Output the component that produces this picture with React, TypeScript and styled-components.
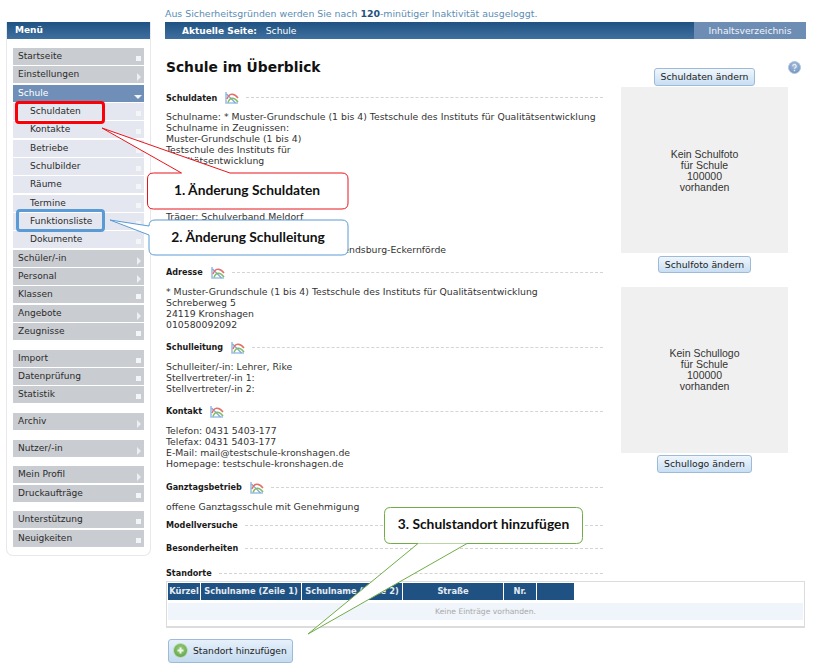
import styled, { createGlobalStyle } from "styled-components";

const GlobalStyle = createGlobalStyle`
    html, body {
        margin: 0;
        padding: 0;
        background: #fff;
    }
    body {
        font-family: "DejaVu Sans", Verdana, sans-serif;
        font-size: 9.3px;
        color: #333;
    }
`;

const Page = styled.div`
    position: relative;
    width: 819px;
    height: 670px;
    overflow: hidden;
    display: flex;
    align-items: flex-start;
    padding: 22px 0 0 6px;
    box-sizing: border-box;
`;

/* sidebar */
const Sidebar = styled.aside`
    width: 145px;
    height: 534px;
    flex-shrink: 0;
    box-sizing: border-box;
    border: 1px solid #e6e8ea;
    border-top: 0;
    border-radius: 0 0 7px 7px;
`;

const BlueHeader = styled.div`
    height: 17px;
    background: linear-gradient(#1f5282, #3f6f9f);
    color: #fff;
    line-height: 17px;
`;

const MenuTitle = styled(BlueHeader)`
    padding-left: 8px;
    margin-bottom: 9px;
    font-weight: 700;
    font-size: 9px;
`;

const MenuGroup = styled.div`
    padding: 0 6px;
    margin-bottom: 9.7px;
`;

const MenuItem = styled.div<{ $variant?: "active" | "sub" }>`
    position: relative;
    height: 17px;
    margin-bottom: 1.33px;
    line-height: 16px;
    font-size: 9.05px;
    padding-left: ${p => (p.$variant === "sub" ? "17px" : "5px")};
    background: ${p =>
        p.$variant === "active" ? "#6f8fb8" : p.$variant === "sub" ? "#e4e7ef" : "#c9ccd1"};
    color: ${p => (p.$variant === "active" ? "#fff" : "#2b2b2b")};
`;

const SquareMark = styled.span`
    position: absolute;
    right: 3px;
    bottom: 4px;
    width: 5px;
    height: 5px;
    background: #f4f5f7;
`;

const ArrowRight = styled.span`
    position: absolute;
    right: 3px;
    bottom: 2px;
    border-left: 4px solid #eef0f3;
    border-top: 4px solid transparent;
    border-bottom: 4px solid transparent;
`;

const ArrowDown = styled.span`
    position: absolute;
    right: 2px;
    bottom: 3px;
    border-top: 4px solid #f4f5f7;
    border-left: 4px solid transparent;
    border-right: 4px solid transparent;
`;

/* main area */
const Main = styled.main`
    margin-left: 14px;
    width: 641px;
    flex-shrink: 0;
`;

const Notice = styled.div`
    margin-top: -14px;
    height: 14px;
    line-height: 12px;
    font-size: 9.4px;
    color: #5b8db5;
    b {
        color: #1f5282;
    }
`;

const TopBar = styled(BlueHeader)`
    display: flex;
`;

const Breadcrumb = styled.div`
    flex: 1;
    padding-left: 17px;
    font-size: 9.2px;
    b {
        font-size: 9px;
        margin-right: 6px;
    }
`;

const TocTab = styled.div`
    width: 112px;
    text-align: center;
    background: #6d8db5;
    color: #f2f4f8;
    font-size: 9.2px;
    font-weight: 400;
`;

const Columns = styled.div`
    display: flex;
    position: relative;
`;

const Content = styled.div`
    width: 437px;
    padding-left: 1px;
    margin-right: 1px;
    white-space: nowrap;
`;

const Title = styled.h1`
    margin: 20px 0 0;
    font-size: 13.8px;
    line-height: 17px;
    font-weight: 700;
    color: #111;
`;

const Section = styled.section<{ $top: number }>`
    margin-top: ${p => p.$top}px;
`;

const SectionHead = styled.div`
    display: flex;
    align-items: center;
    height: 13px;
    font-size: 8.1px;
    font-weight: 700;
    color: #1a1a1a;
`;

const DashedLine = styled.span`
    flex: 1;
    margin-left: 7px;
    border-top: 1px dashed #d4d4d4;
`;

const IconSlot = styled.svg`
    margin-left: 8px;
    flex-shrink: 0;
`;

const Lines = styled.div`
    margin-top: 7px;
    line-height: 11.1px;
    font-size: 9.32px;
    color: #333;
`;

const Side = styled.div`
    width: 167px;
    margin-left: 17px;
    display: flex;
    flex-direction: column;
    align-items: center;
    padding-top: 29px;
`;

const PlainButton = styled.button`
    height: 17.5px;
    padding: 0 6px;
    border: 1px solid #9dbbd8;
    border-radius: 3px;
    background: linear-gradient(#f0f6fc, #c8def3);
    color: #222;
    font-family: inherit;
    font-size: 9.3px;
    line-height: 15px;
    white-space: nowrap;
`;

const PhotoBox = styled.div`
    width: 167px;
    height: 166px;
    box-sizing: border-box;
    padding-top: 1px;
    margin: 1.5px 0 2.5px;
    background: #f0f0f0;
    display: flex;
    align-items: center;
    justify-content: center;
    text-align: center;
    line-height: 11px;
    font-family: "Liberation Sans", Arial, sans-serif;
    font-size: 10.5px;
    color: #333;
`;

const PhotoGap = styled.div`
    height: 12px;
`;

const HelpIcon = styled.svg`
    position: absolute;
    top: 22px;
    left: 623px;
`;

const TableFrame = styled.div`
    margin-top: 1px;
    width: 639px;
    height: 47px;
    box-sizing: border-box;
    border: 1px solid #dcdcdc;
    border-bottom-width: 2px;
    padding: 1px;
`;

const HeadRow = styled.div`
    display: flex;
    gap: 1px;
`;

const HeadCell = styled.div<{ $w: number }>`
    width: ${p => p.$w}px;
    height: 17px;
    background: #1f5282;
    color: #e4ebf3;
    font-size: 8.3px;
    font-weight: 700;
    line-height: 16px;
    text-align: center;
    white-space: nowrap;
`;

const EmptyRow = styled.div`
    margin-top: 3px;
    height: 17px;
    background: #f0f4fb;
    text-align: center;
    color: #a9a9a9;
    font-size: 7.6px;
    line-height: 18px;
`;

const AddButton = styled.button`
    display: flex;
    align-items: center;
    gap: 5px;
    margin: 11px 0 0 2px;
    height: 24px;
    width: 125px;
    padding: 0 0 0 4px;
    border: 1px solid #9dbbd8;
    border-radius: 3px;
    background: linear-gradient(#e6f0fa, #c4dbf1);
    color: #222;
    font-family: inherit;
    font-size: 9.2px;
    white-space: nowrap;
`;

/* annotation overlays */
const Marker = styled.div<{ $color: string; $left: number; $top: number; $w: number; $h: number }>`
    position: absolute;
    left: ${p => p.$left}px;
    top: ${p => p.$top}px;
    width: ${p => p.$w}px;
    height: ${p => p.$h}px;
    box-sizing: border-box;
    border: 3px solid ${p => p.$color};
    border-radius: 4px;
`;

const CalloutShape = styled.svg`
    position: absolute;
    left: 0;
    top: 0;
`;

const CalloutLabel = styled.div<{ $left: number; $top: number; $w: number; $h: number }>`
    position: absolute;
    left: ${p => p.$left}px;
    top: ${p => p.$top}px;
    width: ${p => p.$w}px;
    height: ${p => p.$h}px;
    display: flex;
    align-items: center;
    justify-content: center;
    font-family: Lato, "Open Sans", sans-serif;
    font-size: 13.8px;
    font-weight: 700;
    color: #111;
    white-space: nowrap;
`;

const ChartIcon = () => (
    <IconSlot width="14" height="13" viewBox="0 0 14 13">
        <path d="M1 1v11h12" fill="none" stroke="#9dc0e6" strokeWidth="1.6" />
        <path d="M1.5 3 10.5 12" fill="none" stroke="#7ba9d8" strokeWidth="1.2" />
        <path d="M2 8C4 2 9 1.5 13 7" fill="none" stroke="#e2706c" strokeWidth="1.5" />
        <path d="M3 11.5C5 6 9 6 13 11" fill="none" stroke="#82bb62" strokeWidth="1.5" />
    </IconSlot>
);

const MenuRow = ({ label, mark, variant }: { label: string; mark: "s" | "r" | "d"; variant?: "active" | "sub" }) => (
    <MenuItem $variant={variant}>
        {label}
        {mark === "s" && <SquareMark />}
        {mark === "r" && <ArrowRight />}
        {mark === "d" && <ArrowDown />}
    </MenuItem>
);

const Head = ({ label, icon = true }: { label: string; icon?: boolean }) => (
    <SectionHead>
        {label}
        {icon && <ChartIcon />}
        <DashedLine />
    </SectionHead>
);

const roundBox = (x: number, y: number, w: number, h: number, r: number) =>
    `M${x + r} ${y}H${x + w - r}Q${x + w} ${y} ${x + w} ${y + r}V${y + h - r}Q${x + w} ${y + h} ${x + w - r} ${y + h}H${x + r}Q${x} ${y + h} ${x} ${y + h - r}V${y + r}Q${x} ${y} ${x + r} ${y}Z`;

export default function App() {
    return (
        <>
            <GlobalStyle />
            <Page>
                <Sidebar>
                    <MenuTitle>Menü</MenuTitle>
                    <MenuGroup>
                        <MenuRow label="Startseite" mark="s" />
                        <MenuRow label="Einstellungen" mark="r" />
                        <MenuRow label="Schule" mark="d" variant="active" />
                        <MenuRow label="Schuldaten" mark="s" variant="sub" />
                        <MenuRow label="Kontakte" mark="s" variant="sub" />
                        <MenuRow label="Betriebe" mark="s" variant="sub" />
                        <MenuRow label="Schulbilder" mark="s" variant="sub" />
                        <MenuRow label="Räume" mark="s" variant="sub" />
                        <MenuRow label="Termine" mark="s" variant="sub" />
                        <MenuRow label="Funktionsliste" mark="s" variant="sub" />
                        <MenuRow label="Dokumente" mark="s" variant="sub" />
                        <MenuRow label="Schüler/-in" mark="r" />
                        <MenuRow label="Personal" mark="r" />
                        <MenuRow label="Klassen" mark="s" />
                        <MenuRow label="Angebote" mark="r" />
                        <MenuRow label="Zeugnisse" mark="s" />
                    </MenuGroup>
                    <MenuGroup>
                        <MenuRow label="Import" mark="s" />
                        <MenuRow label="Datenprüfung" mark="s" />
                        <MenuRow label="Statistik" mark="s" />
                    </MenuGroup>
                    <MenuGroup>
                        <MenuRow label="Archiv" mark="r" />
                    </MenuGroup>
                    <MenuGroup>
                        <MenuRow label="Nutzer/-in" mark="r" />
                    </MenuGroup>
                    <MenuGroup>
                        <MenuRow label="Mein Profil" mark="r" />
                        <MenuRow label="Druckaufträge" mark="s" />
                    </MenuGroup>
                    <MenuGroup>
                        <MenuRow label="Unterstützung" mark="s" />
                        <MenuRow label="Neuigkeiten" mark="s" />
                    </MenuGroup>
                </Sidebar>

                <Main>
                    <Notice>
                        Aus Sicherheitsgründen werden Sie nach <b>120</b>-minütiger Inaktivität ausgeloggt.
                    </Notice>
                    <TopBar>
                        <Breadcrumb>
                            <b>Aktuelle Seite:</b> Schule
                        </Breadcrumb>
                        <TocTab>Inhaltsverzeichnis</TocTab>
                    </TopBar>
                    <Columns>
                        <Content>
                            <Title>Schule im Überblick</Title>
                            <Section $top={15}>
                                <Head label="Schuldaten" />
                                <Lines>
                                    Schulname: * Muster-Grundschule (1 bis 4) Testschule des Instituts für Qualitätsentwicklung
                                    <br />
                                    Schulname in Zeugnissen:
                                    <br />
                                    Muster-Grundschule (1 bis 4)
                                    <br />
                                    Testschule des Instituts für
                                    <br />
                                    Qualitätsentwicklung
                                    <br />
                                    <br />
                                    <br />
                                    <br />
                                    Rechtsform: öffentlich
                                    <br />
                                    Träger: Schulverband Meldorf
                                    <br />
                                    <br />
                                    <br />
                                    Schulaufsicht: Schulamt des Kreises Rendsburg-Eckernförde
                                </Lines>
                            </Section>
                            <Section $top={10.7}>
                                <Head label="Adresse" />
                                <Lines>
                                    * Muster-Grundschule (1 bis 4) Testschule des Instituts für Qualitätsentwicklung
                                    <br />
                                    Schreberweg 5
                                    <br />
                                    24119 Kronshagen
                                    <br />
                                    010580092092
                                </Lines>
                            </Section>
                            <Section $top={10.6}>
                                <Head label="Schulleitung" />
                                <Lines>
                                    Schulleiter/-in: Lehrer, Rike
                                    <br />
                                    Stellvertreter/-in 1:
                                    <br />
                                    Stellvertreter/-in 2:
                                </Lines>
                            </Section>
                            <Section $top={10.7}>
                                <Head label="Kontakt" />
                                <Lines>
                                    Telefon: 0431 5403-177
                                    <br />
                                    Telefax: 0431 5403-177
                                    <br />
                                    E-Mail: mail@testschule-kronshagen.de
                                    <br />
                                    Homepage: testschule-kronshagen.de
                                </Lines>
                            </Section>
                            <Section $top={11.6}>
                                <Head label="Ganztagsbetrieb" />
                                <Lines>offene Ganztagsschule mit Genehmigung</Lines>
                            </Section>
                            <Section $top={7}>
                                <Head label="Modellversuche" icon={false} />
                            </Section>
                            <Section $top={10}>
                                <Head label="Besonderheiten" icon={false} />
                            </Section>
                            <Section $top={12}>
                                <Head label="Standorte" icon={false} />
                            </Section>
                            <TableFrame>
                                <HeadRow>
                                    <HeadCell $w={32}>Kürzel</HeadCell>
                                    <HeadCell $w={100}>Schulname (Zeile 1)</HeadCell>
                                    <HeadCell $w={100}>Schulname (Zeile 2)</HeadCell>
                                    <HeadCell $w={100}>Straße</HeadCell>
                                    <HeadCell $w={32}>Nr.</HeadCell>
                                    <HeadCell $w={37} />
                                </HeadRow>
                                <EmptyRow>Keine Einträge vorhanden.</EmptyRow>
                            </TableFrame>
                            <AddButton>
                                <svg width="15" height="15" viewBox="0 0 15 15">
                                    <defs>
                                        <radialGradient id="plusFill" cx="50%" cy="40%" r="60%">
                                            <stop offset="0%" stopColor="#9fd07f" />
                                            <stop offset="100%" stopColor="#5fa54a" />
                                        </radialGradient>
                                    </defs>
                                    <circle cx="7.5" cy="7.5" r="7" fill="url(#plusFill)" stroke="#c9dcc4" />
                                    <path d="M7.5 4.5v6M4.5 7.5h6" stroke="#eef6ea" strokeWidth="2" />
                                </svg>
                                Standort hinzufügen
                            </AddButton>
                        </Content>
                        <Side>
                            <PlainButton>Schuldaten ändern</PlainButton>
                            <PhotoBox>
                                <div>
                                    Kein Schulfoto
                                    <br />
                                    für Schule
                                    <br />
                                    100000
                                    <br />
                                    vorhanden
                                </div>
                            </PhotoBox>
                            <PlainButton>Schulfoto ändern</PlainButton>
                            <PhotoGap />
                            <PhotoBox>
                                <div>
                                    Kein Schullogo
                                    <br />
                                    für Schule
                                    <br />
                                    100000
                                    <br />
                                    vorhanden
                                </div>
                            </PhotoBox>
                            <PlainButton>Schullogo ändern</PlainButton>
                        </Side>
                        <HelpIcon width="13" height="13" viewBox="0 0 13 13">
                            <defs>
                                <radialGradient id="helpFill" cx="50%" cy="35%" r="65%">
                                    <stop offset="0%" stopColor="#a9c0dc" />
                                    <stop offset="100%" stopColor="#6f93bf" />
                                </radialGradient>
                            </defs>
                            <circle cx="6.5" cy="6.5" r="6" fill="url(#helpFill)" stroke="#b4c6dd" />
                            <path d="M4.8 5.2a1.7 1.7 0 1 1 2.4 1.5c-.5.3-.7.5-.7 1.1" fill="none" stroke="#e6edf5" strokeWidth="1.3" />
                            <circle cx="6.5" cy="9.6" r=".8" fill="#e6edf5" />
                        </HelpIcon>
                    </Columns>
                </Main>

                <Marker $color="#fb0007" $left={15} $top={101} $w={90} $h={23} />
                <Marker $color="#5b9bd5" $left={16} $top={209} $w={89} $h={22.5} />

                <CalloutShape width="819" height="670" viewBox="0 0 819 670">
                    <path
                        d="M181.5 173L102 128L230 173H342Q348 173 348 179V203Q348 209 342 209H153.5Q147.5 209 147.5 203V179Q147.5 173 153.5 173Z"
                        fill="#fff"
                        stroke="#e8141c"
                    />
                    <path
                        d="M149 226L110 220L149 235V249Q149 255 155 255H342Q348 255 348 249V226Q348 220 342 220H155Q149 220 149 226Z"
                        fill="#fff"
                        stroke="#5b9bd5"
                    />
                    <path d={roundBox(384.5, 507.5, 198, 36, 6)} fill="#fff" stroke="#70ad47" />
                    <path d="M418 543.5L308 634L467 543.5" fill="#fff" stroke="#70ad47" />
                </CalloutShape>
                <CalloutLabel $left={147} $top={171} $w={200} $h={36}>1. Änderung Schuldaten</CalloutLabel>
                <CalloutLabel $left={149} $top={218} $w={198} $h={36}>2. Änderung Schulleitung</CalloutLabel>
                <CalloutLabel $left={384} $top={505} $w={199} $h={36}>3. Schulstandort hinzufügen</CalloutLabel>
            </Page>
        </>
    );
}
